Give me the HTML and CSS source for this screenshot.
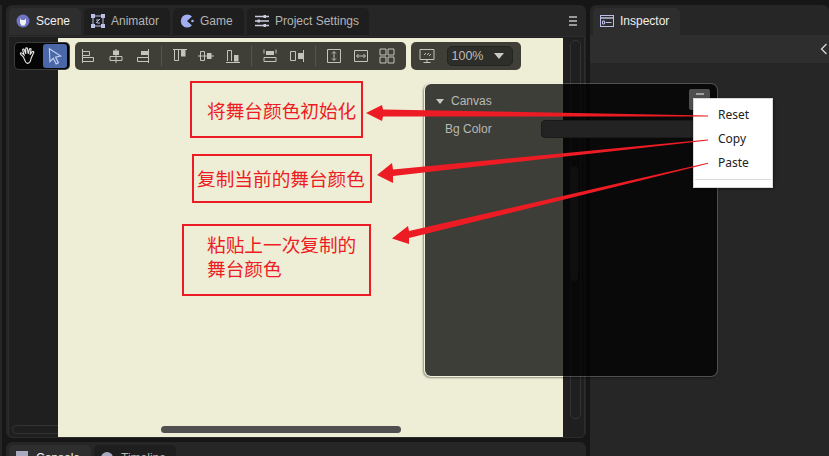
FILE: index.html
```html
<!DOCTYPE html>
<html>
<head>
  <title>Scene</title>
  <link rel="stylesheet" href="styles.css">
</head>
<body>
  <div class="app">
    <div class="edge"></div>
    <div class="left-col">

      <div class="panel scene-panel">
        <div class="tabs">
          <div class="tab active tab-scene">
            <svg class="tab-icon" viewBox="0 0 14 14"><circle cx="7" cy="7" r="6.500" fill="#6f75c4"/><path d="M4 4.500l1.500 1.500h3L10 4.500V9l-1.500 2.500h-3L4 9z" fill="#f2f2f2"/></svg>
            Scene
          </div>
          <div class="tab tab-animator">
            <svg class="tab-icon" viewBox="0 0 14 14"><g fill="#b9bfe6"><rect x="0" y="0" width="4" height="4"/><rect x="10" y="0" width="4" height="4"/><rect x="0" y="10" width="4" height="4"/><rect x="10" y="10" width="4" height="4"/></g><path d="M4 2h6M2 4v6M4 12h6M12 4v6M5 9l4-4M5 6h3M6 9h3" stroke="#b9bfe6" fill="none"/></svg>
            Animator
          </div>
          <div class="tab tab-game">
            <svg class="tab-icon" viewBox="0 0 14 14"><path d="M12 2.500A6.500 6.500 0 1 0 12 11.500L7 7z" fill="#a3aef2"/><circle cx="12.500" cy="7" r="1.300" fill="#a3aef2"/></svg>
            Game
          </div>
          <div class="tab tab-project">
            <svg class="tab-icon wide" viewBox="0 0 14 14"><path d="M0 2.500h14M0 7h14M0 11.500h14" stroke="#c9cbe0" stroke-width="1.300"/><g fill="#c9cbe0"><rect x="8.500" y="1" width="2.500" height="3"/><rect x="2.500" y="5.500" width="2.500" height="3"/><rect x="8.500" y="10" width="2.500" height="3"/></g></svg>
            Project Settings
          </div>
          <div class="panel-menu"><span></span><span></span><span></span></div>
        </div>

        <div class="scene-body">
          <div class="track-h"></div>
          <div class="track-v"><div class="thumb-v"></div></div>
          <div class="stage"></div>
          <div class="thumb-h"></div>

          <div class="toolbars">
            <div class="tool-group mode">
              <div class="tool">
                <svg viewBox="0 0 16 16"><path d="M4 9L1.500 6.500c-.8-1 .3-1.800 1.200-1L4.500 7 3.300 2.800c-.3-1.100 1-1.400 1.400-.4L6 6 6 1.500c0-1 1.400-1 1.500 0L8.200 6l1.100-4c.3-1 1.600-.6 1.400.4L9.800 6.800l2-2.600c.7-.8 1.800 0 1.200 1L10.800 10c-.5 2.800-1.500 4.500-3.300 4.500-1.800 0-2.500-3-3.500-5.500z" fill="none" stroke="#e6e6e6" stroke-width="1"/></svg>
              </div>
              <div class="tool selected">
                <svg viewBox="0 0 16 16"><path d="M3 1.500l10 6.500-4.500 1 2.500 5-2 1-2.500-5L3.500 13z" fill="none" stroke="#c4d0ee" stroke-width="1"/></svg>
              </div>
            </div>

            <div class="tool-group align">
              <div class="tool"><svg viewBox="0 0 16 16"><path d="M1.500 1v14M1.500 3.500h7v4h-7M1.500 9.500h11v4h-11" class="ln"/></svg></div>
              <div class="tool"><svg viewBox="0 0 16 16"><path d="M8 1v14M2 8.500h12v4H2z" class="ln"/><rect x="5" y="2.500" width="6" height="4.500" class="fl"/></svg></div>
              <div class="tool"><svg viewBox="0 0 16 16"><path d="M14.500 1v14M14.500 9.500h-11v4h11" class="ln"/><rect x="7" y="3" width="7.500" height="4" class="fl"/></svg></div>
              <div class="sep"></div>
              <div class="tool"><svg viewBox="0 0 16 16"><path d="M1 1.500h14M2.500 1.500v11h4v-11" class="ln"/><rect x="9" y="2" width="4.500" height="6.500" class="fl"/></svg></div>
              <div class="tool"><svg viewBox="0 0 16 16"><path d="M0 8h16M2.500 3.500h4v9h-4z" class="ln"/><rect x="9" y="5" width="4.500" height="6" class="fl"/></svg></div>
              <div class="tool"><svg viewBox="0 0 16 16"><path d="M1 14.500h14M2.500 13V2.500h4V13" class="ln"/><rect x="9" y="7" width="4.500" height="6.500" class="fl"/></svg></div>
              <div class="sep"></div>
              <div class="tool"><svg viewBox="0 0 16 16"><path d="M2 1.500v4M14 1.500v4M2 9.500h12v4H2z" class="ln"/><rect x="4" y="3" width="8" height="4" class="fl"/></svg></div>
              <div class="tool"><svg viewBox="0 0 16 16"><path d="M1.500 3.500h5v9h-5zM14.500 2v12" class="ln"/><rect x="9" y="5" width="5" height="6" class="fl"/></svg></div>
              <div class="sep"></div>
              <div class="tool"><svg viewBox="0 0 16 16"><path d="M1.500 1.500h13v13h-13zM8 4v8M6 5.500L8 3.500l2 2M6 10.500l2 2 2-2" class="ln"/></svg></div>
              <div class="tool"><svg viewBox="0 0 16 16"><path d="M1.500 2.500h13v11h-13zM4 8h8M5.500 6L3.500 8l2 2M10.500 6l2 2-2 2" class="ln"/></svg></div>
              <div class="tool"><svg viewBox="0 0 16 16"><path d="M1 1h6v6H1zM9 1h6v6H9zM1 9h6v6H1zM9 9h6v6H9z" class="ln"/></svg></div>
            </div>

            <div class="tool-group zoom">
              <div class="tool"><svg viewBox="0 0 16 16"><path d="M1 1.500h14v10H1zM8 11.500v3M4.500 14.500h7M5 7l2-2M8 7l2-2M10 8l2-2" class="ln"/></svg></div>
              <div class="zoom-select">100%<span class="caret"></span></div>
            </div>
          </div>

          <!-- color panel floats over the stage -->
          <div class="canvas-panel">
            <div class="section-head"><span class="caret small"></span>Canvas</div>
            <div class="prop-row">
              <span class="prop-name">Bg Color</span>
              <div class="color-field"></div>
            </div>
            <div class="panel-btn"><span></span></div>
          </div>
        </div>
      </div>

      <div class="panel bottom-panel">
        <div class="tabs">
          <div class="tab active tab-bottom">
            <svg class="tab-icon" viewBox="0 0 14 14"><rect width="12" height="12" fill="#a9a9c0"/></svg>
            Console
          </div>
          <div class="tab tab-bottom">
            <svg class="tab-icon" viewBox="0 0 14 14"><circle cx="6" cy="7" r="6" fill="#a9a9c0"/></svg>
            Timeline
          </div>
        </div>
      </div>
    </div>

    <div class="panel inspector">
      <div class="tabs">
        <div class="tab active tab-inspector">
          <svg class="tab-icon" viewBox="0 0 14 14"><rect x=".5" y="1.500" width="13" height="11" fill="none" stroke="#b9bfe6"/><path d="M.5 4h13" stroke="#b9bfe6" stroke-width="1.500"/><path d="M2.500 7h2v3h-2zM5.500 8.500h6" fill="none" stroke="#b9bfe6"/></svg>
          Inspector
        </div>
      </div>
      <div class="insp-bar">
        <svg viewBox="0 0 8 12"><path d="M6.500 1L1.500 6l5 5" fill="none" stroke="#d8d8d8" stroke-width="1.300"/></svg>
      </div>
    </div>
  </div>

  <div class="menu">
    <div class="menu-item">Reset</div>
    <div class="menu-item">Copy</div>
    <div class="menu-item">Paste</div>
    <div class="menu-line"></div>
  </div>

  <!-- red annotations drawn on top of the screenshot -->
  <div class="note note-1">将舞台颜色初始化</div>
  <div class="note note-2">复制当前的舞台颜色</div>
  <div class="note note-3">粘贴上一次复制的<br>舞台颜色</div>

  <svg class="arrows" viewBox="0 0 829 456">
    <polygon points="708,115.500 383,109.500 382,105 366,113 382,121 383,116.500 708,116.500"/>
    <polygon points="708,139.500 393,169.500 392,163 377,175 393,183 393,176 708,140.500"/>
    <polygon points="708,162.800 409,231 408,226 392,238.500 409,244 409,238 708,163.800"/>
  </svg>
</body>
</html>
```
FILE: styles.css
```css
* { box-sizing: border-box; }
html, body { margin: 0; height: 100%; overflow: hidden; }
body { background: #161616; font-family: "Liberation Sans", Arial, sans-serif; font-size: 12px; color: #c8c8c8; position: relative; }

.app { display: flex; height: 456px; padding-top: 5px; }
.edge { width: 2px; margin-right: 4px; background: #262626; }
.left-col { width: 580px; display: flex; flex-direction: column; gap: 4px; }
.panel { background: #262626; border-radius: 6px 6px 0 0; }
.scene-panel { height: 435px; display: flex; flex-direction: column; border-radius: 6px; }
.bottom-panel { flex: 1; }
.inspector { width: 239px; margin-left: 4px; }

.tabs { display: flex; gap: 3px; padding: 3px 0 0 3px; height: 30px; position: relative; }
.tab { height: 27px; padding: 0 0 2px 7px; display: flex; align-items: center; white-space: nowrap; background: #1e1e1e; border-radius: 5px 5px 0 0; color: #b4b4b4; }
.tab.active { background: #2e2e2e; color: #f0f0f0; }
.tab-icon { width: 14px; height: 14px; margin-right: 6px; flex: none; }
.tab-icon.wide { width: 16px; margin-right: 5px; }
.tab-scene { width: 72px; }
.tab-animator { width: 86px; }
.tab-game { width: 71px; }
.tab-project { width: 122px; }
.tab-bottom { width: 82px; }
.tab-inspector { width: 87px; }

.panel-menu { position: absolute; right: 9px; top: 11px; display: flex; flex-direction: column; gap: 2px; }
.panel-menu span { display: block; width: 8px; height: 2px; background: #9a9a9a; }

.scene-body { position: relative; margin: 1px 1px 0 2px; height: 402px; background: #1f1f1f; border-radius: 0 0 5px 5px; border: 1px solid #2c2c2c; }
.stage { position: absolute; left: 49px; top: 1px; width: 505px; bottom: 0; background: #eeeed6; }
.track-h { position: absolute; left: 3px; right: 23px; bottom: 3px; height: 9px; border: 1px solid #333; border-radius: 5px; }
.thumb-h { position: absolute; left: 152px; bottom: 4px; width: 240px; height: 7px; background: #505050; border-radius: 4px; }
.track-v { position: absolute; right: 3px; top: 3px; bottom: 18px; width: 11px; border: 1px solid #333; border-radius: 5px; }
.thumb-v { position: absolute; left: 0; top: 125px; width: 7px; height: 115px; background: #3a3a3a; border-radius: 4px; }

.toolbars { position: absolute; left: 6px; top: 5px; display: flex; gap: 5px; align-items: flex-start; }
.tool-group { display: flex; align-items: center; height: 28px; background: #3f3f38; border-radius: 5px; }
.tool-group.mode { background: #050505; height: 26px; margin-top: 1px; width: 54px; padding: 0 2px 0 0; gap: 2px; margin-right: 1px; border-radius: 4px; box-shadow: 0 0 0 1px #3c3c38; }
.tool-group.align { width: 331px; padding-left: 1px; }
.tool-group.zoom { width: 110px; padding-left: 3px; }
.tool { width: 26.500px; height: 24px; display: flex; align-items: center; justify-content: center; flex: none; border-radius: 3px; }
.mode .tool { width: 26px; }
.tool svg { width: 16px; height: 16px; }
.mode .tool svg { width: 18px; height: 18px; }
.tool.selected { background: #4a68a8; width: 24px; }
.sep { width: 1px; height: 20px; background: #55554e; margin: 0 5px; flex: none; }
.ln { fill: none; stroke: #c4c4bc; stroke-width: 1; }
.fl { fill: #c4c4bc; }

.zoom-select { margin-left: 6px; width: 66px; height: 20px; background: #2d2d2a; border-radius: 5px; border: 1px solid #232321; color: #bdbdb8; padding: 0 8px 0 4px; display: flex; align-items: center; justify-content: space-between; font-size: 12.500px; }
.caret { width: 0; height: 0; border-left: 5px solid transparent; border-right: 5px solid transparent; border-top: 6px solid #c8c8c8; }
.caret.small { border-left-width: 4px; border-right-width: 4px; border-top-width: 5px; margin-right: 7px; }

.canvas-panel { position: absolute; left: 415px; top: 46px; width: 294px; height: 294px; background: rgba(0, 0, 0, .74); background-clip: padding-box; border: 1px solid rgba(255, 255, 255, .2); border-radius: 7px; box-shadow: -1px 1px 2px rgba(0, 0, 0, .4); }
.section-head { display: flex; align-items: center; padding: 10px 0 0 11px; color: #b8b8b4; }
.prop-row { display: flex; align-items: center; justify-content: space-between; margin-top: 12px; height: 18px; padding-left: 20px; }
.prop-name { color: #b8b8b4; }
.color-field { width: 176px; height: 18px; background: #232323; border: 1px solid #1a1a1a; border-radius: 4px 0 0 4px; }
.panel-btn { position: absolute; right: 7px; top: 5px; width: 21px; height: 21px; background: #4f4f4f; border-radius: 2px; display: flex; justify-content: center; padding-top: 4px; }
.panel-btn span { width: 8px; height: 2px; background: #a0a0a0; }

.insp-bar { height: 28px; background: #2e2e2e; display: flex; align-items: center; justify-content: flex-end; padding-right: 1px; }
.insp-bar svg { width: 8px; height: 12px; }

.menu { position: absolute; left: 693px; top: 98px; width: 80px; height: 90px; background: #fff; border: 1px solid #d8d8d8; box-shadow: 1px 1px 3px rgba(0, 0, 0, .4); padding-top: 4px; font-family: "Noto Sans", sans-serif; color: #222; }
.menu-item { height: 24px; line-height: 24px; padding-left: 24px; font-size: 12px; }
.menu-line { height: 1px; background: #dcdcdc; margin: 4px 1px 0; }

.note { position: absolute; border: 2px solid #ed1c24; color: #ed1c24; font-family: "Noto Sans CJK SC", sans-serif; font-size: 18.670px; line-height: 24px; white-space: nowrap; }
.note-1 { left: 190px; top: 81px; width: 173px; height: 57px; padding: 15px 0 0 15px; }
.note-2 { left: 192px; top: 154px; width: 180px; height: 49px; padding: 10px 0 0 3px; }
.note-3 { left: 182px; top: 224px; width: 189px; height: 72px; padding: 6px 0 0 23px; }

.arrows { position: absolute; left: 0; top: 0; width: 829px; height: 456px; }
.arrows polygon { fill: #ed1c24; }
```
